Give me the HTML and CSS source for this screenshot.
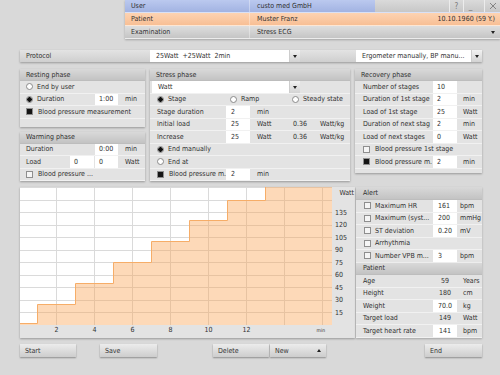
FILE: index.html
```html
<!DOCTYPE html>
<html>
<head>
<meta charset="utf-8">
<link rel="stylesheet" href="styles.css">
</head>
<body>
<div class="app">
  <div class="hdr">
    <div class="hrow user">
      <div class="hl">User</div>
      <div class="hv">custo med GmbH</div>
      <div class="wctl">
        <span class="wb">?</span>
        <span class="wb">_</span>
        <span class="wb wx"><svg width="8" height="8" viewBox="0 0 8 8"><path d="M1 1L7 7M7 1L1 7" stroke="#7a7a7a" stroke-width="0.9" fill="none"/></svg></span>
      </div>
    </div>
    <div class="hrow patient">
      <div class="hl">Patient</div>
      <div class="hv grow"><span>Muster Franz</span><span>10.10.1960 (59 Y.)</span></div>
    </div>
    <div class="hrow exam">
      <div class="hl">Examination</div>
      <div class="hv grow"><span>Stress ECG</span><i class="tri"></i></div>
    </div>
  </div>

  <div class="proto">
    <div class="plabel">Protocol</div>
    <div class="select ps1"><span class="stext">25Watt&nbsp; +25Watt&nbsp; 2min</span><i class="dd"></i></div>
    <div class="pgap"></div>
    <div class="select ps2"><span class="stext">Ergometer manually, BP manu...</span><i class="dd"></i></div>
  </div>

  <div class="main">
    <div class="col colleft">
      <div class="panel rest">
        <div class="ph">Resting phase</div>
        <div class="row"><span class="lab"><i class="rb"></i>End by user</span></div>
        <div class="row"><span class="lab"><i class="rb on"></i>Duration</span><span class="in">1:00</span><span class="u">min</span></div>
        <div class="row"><span class="lab full"><i class="cb on"></i>Blood pressure measurement</span></div>
      </div>
      <div class="panel warm">
        <div class="ph">Warming phase</div>
        <div class="row"><span class="lab">Duration</span><span class="in">0:00</span><span class="u">min</span></div>
        <div class="row"><span class="lab short">Load</span><span class="in in0">0</span><span class="in">0</span><span class="u">Watt</span></div>
        <div class="row"><span class="lab full"><i class="cb"></i>Blood pressure ...</span></div>
      </div>
    </div>

    <div class="panel stress">
      <div class="ph">Stress phase</div>
      <div class="row"><div class="select rsel"><span class="stext">Watt</span><i class="dd"></i></div></div>
      <div class="row"><span class="opt o1"><i class="rb on"></i>Stage</span><span class="opt o2"><i class="rb"></i>Ramp</span><span class="opt o3"><i class="rb"></i>Steady state</span></div>
      <div class="row"><span class="lab">Stage duration</span><span class="in">2</span><span class="u">min</span></div>
      <div class="row"><span class="lab">Initial load</span><span class="in">25</span><span class="u">Watt</span><span class="v">0.36</span><span class="u2">Watt/kg</span></div>
      <div class="row"><span class="lab">Increase</span><span class="in">25</span><span class="u">Watt</span><span class="v">0.36</span><span class="u2">Watt/kg</span></div>
      <div class="row"><span class="lab full"><i class="rb on"></i>End manually</span></div>
      <div class="row"><span class="lab full"><i class="rb"></i>End at</span></div>
      <div class="row"><span class="lab"><i class="cb on"></i>Blood pressure m.</span><span class="in">2</span><span class="u">min</span></div>
    </div>

    <div class="panel recov">
      <div class="ph">Recovery phase</div>
      <div class="row"><span class="lab">Number of stages</span><span class="in">10</span><span class="u"></span></div>
      <div class="row"><span class="lab">Duration of 1st stage</span><span class="in">2</span><span class="u">min</span></div>
      <div class="row"><span class="lab">Load of 1st stage</span><span class="in">25</span><span class="u">Watt</span></div>
      <div class="row"><span class="lab">Duration of next stag</span><span class="in">2</span><span class="u">min</span></div>
      <div class="row"><span class="lab">Load of next stages</span><span class="in">0</span><span class="u">Watt</span></div>
      <div class="row"><span class="lab full"><i class="cb"></i>Blood pressure 1st stage</span></div>
      <div class="row"><span class="lab"><i class="cb on"></i>Blood pressure m.</span><span class="in">2</span><span class="u">min</span></div>
    </div>
  </div>

  <div class="lower">
    <div class="chart">
      <div class="plotcol">
        <svg class="plot" width="312" height="138" viewBox="0 0 312 138">
          <rect width="312" height="138" fill="#ffffff"/>
          <path d="M36.5 0V138M74.5 0V138M112.5 0V138M150.5 0V138M188.5 0V138M226.5 0V138M264.5 0V138M302.5 0V138M0 125.5H312M0 113.5H312M0 100.5H312M0 88.5H312M0 75.5H312M0 63.5H312M0 50.5H312M0 38.5H312M0 25.5H312M0 13.5H312M0 0.5H312" stroke="#dadada" stroke-width="1" fill="none"/>
          <path d="M0 136.5H17.5V117.5H55.5V96.5H93.5V75.5H131.5V54.5H169.5V33.5H207.5V13.5H245.5V-2H312V138H0Z" fill="rgba(251,165,85,0.42)"/>
          <path d="M0 136.5H17.5V117.5H55.5V96.5H93.5V75.5H131.5V54.5H169.5V33.5H207.5V13.5H245.5V-2" stroke="#f6ad68" stroke-width="1" fill="none"/>
        </svg>
        <div class="xaxis">
          <span class="xt" style="left:36.5px">2</span>
          <span class="xt" style="left:74.5px">4</span>
          <span class="xt" style="left:112.5px">6</span>
          <span class="xt" style="left:150.5px">8</span>
          <span class="xt" style="left:188.5px">10</span>
          <span class="xt" style="left:226.5px">12</span>
          <span class="xmin">min</span>
        </div>
      </div>
      <div class="yaxis">
        <span class="yunit">Watt</span>
        <span class="yt" style="top:25.5px">135</span>
        <span class="yt" style="top:38px">120</span>
        <span class="yt" style="top:50.5px">105</span>
        <span class="yt" style="top:63px">90</span>
        <span class="yt" style="top:75.5px">75</span>
        <span class="yt" style="top:88px">60</span>
        <span class="yt" style="top:100.5px">45</span>
        <span class="yt" style="top:113px">30</span>
        <span class="yt" style="top:125.5px">15</span>
      </div>
    </div>

    <div class="rcol">
      <div class="panel alert">
        <div class="ph tall">Alert</div>
        <div class="row"><span class="lab"><i class="cb"></i>Maximum HR</span><span class="in">161</span><span class="u">bpm</span></div>
        <div class="row"><span class="lab"><i class="cb"></i>Maximum (syst...</span><span class="in">200</span><span class="u">mmHg</span></div>
        <div class="row"><span class="lab"><i class="cb"></i>ST deviation</span><span class="in">0.20</span><span class="u">mV</span></div>
        <div class="row"><span class="lab full"><i class="cb"></i>Arrhythmia</span></div>
        <div class="row"><span class="lab"><i class="cb"></i>Number VPB m...</span><span class="in">3</span><span class="u">bpm</span></div>
      </div>
      <div class="panel pat">
        <div class="ph mid">Patient</div>
        <div class="row"><span class="lab">Age</span><span class="val">59</span><span class="u">Years</span></div>
        <div class="row"><span class="lab">Height</span><span class="val">180</span><span class="u">cm</span></div>
        <div class="row"><span class="lab">Weight</span><span class="val white">70.0</span><span class="u">kg</span></div>
        <div class="row"><span class="lab">Target load</span><span class="val">149</span><span class="u">Watt</span></div>
        <div class="row"><span class="lab">Target heart rate</span><span class="val white">141</span><span class="u">bpm</span></div>
      </div>
    </div>
  </div>

  <div class="btns">
    <button class="btn b-start">Start</button>
    <button class="btn b-save">Save</button>
    <button class="btn b-del">Delete</button>
    <button class="btn b-new">New<i class="up"></i></button>
    <button class="btn b-end">End</button>
  </div>
</div>
</body>
</html>
```

FILE: styles.css
```css
* { box-sizing: border-box; margin: 0; padding: 0; }

body {
  background: #d9d9d9;
  font-family: "DejaVu Sans", Verdana, sans-serif;
  font-stretch: condensed;
  font-size: 7px;
  color: #303030;
  width: 500px;
  height: 375px;
  overflow: hidden;
}

.app { width: 500px; height: 375px; }

/* header */
.hdr {
  margin-left: 125px;
  width: 375px;
  box-shadow: 0 1px 2px rgba(0,0,0,0.25);
}
.hrow {
  display: flex;
  height: 13px;
  border-bottom: 1px solid rgba(255,255,255,0.45);
}
.hrow > div { display: flex; align-items: center; white-space: nowrap; }
.hl { width: 125px; padding-left: 6px; border-right: 1px solid rgba(255,255,255,0.35); }
.hv { width: 125px; padding-left: 7px; }
.hv.grow { flex: 1; justify-content: space-between; padding-right: 5px; }
.user { background: linear-gradient(#bbc9ef, #a2b3e2); }
.patient { background: linear-gradient(#fdd3b2, #f8bf95); }
.exam { background: linear-gradient(#dedede, #c5c5c5); }
.wctl {
  flex: 1;
  background: linear-gradient(#dadada, #c7c7c7);
  justify-content: flex-end;
  align-items: stretch !important;
}
.wb {
  width: 14px;
  display: flex;
  align-items: center;
  justify-content: center;
  border-left: 1px solid #ececec;
  color: #7a7a7a;
  font-size: 8px;
}
.wx { width: 16px; margin-left: 7px; }
.tri {
  width: 0; height: 0;
  border-left: 2.5px solid transparent;
  border-right: 2.5px solid transparent;
  border-top: 3px solid #222;
}

/* selects */
.select { display: flex; background: #fff; align-items: stretch; }
.stext { flex: 1; display: flex; align-items: center; padding-left: 6px; white-space: nowrap; overflow: hidden; }
.dd {
  width: 11px;
  position: relative;
  background: linear-gradient(#f2f2f2, #d3d3d3);
  border-left: 1px solid #cdcdcd;
}
.dd::after {
  content: "";
  position: absolute;
  left: 3px; top: 4.5px;
  border-left: 2.5px solid transparent;
  border-right: 2.5px solid transparent;
  border-top: 3px solid #222;
}

/* protocol */
.proto {
  display: flex;
  margin: 11px 0 0 20px;
  width: 462px;
  height: 12px;
  background: linear-gradient(#e3e3e3, #cfcfcf);
  box-shadow: 0 1px 2px rgba(0,0,0,0.3);
}
.plabel { width: 130px; padding-left: 6px; display: flex; align-items: center; }
.ps1 { width: 150px; }
.pgap { width: 56px; }
.ps2 { width: 126px; }

/* panels */
.main {
  display: flex;
  gap: 5px;
  margin: 7px 0 0 20px;
  width: 462px;
  align-items: flex-start;
}
.col { display: flex; flex-direction: column; gap: 5px; }
.panel { background: #e3e3e3; box-shadow: 0 1px 2px rgba(0,0,0,0.3); }
.ph {
  height: 12px;
  display: flex;
  align-items: center;
  padding-left: 6px;
  background: linear-gradient(#d9d9d9, #c3c3c3);
  border-bottom: 1px solid #bdbdbd;
}
.ph.tall { height: 13px; padding-left: 7px; }
.ph.mid { height: 12.5px; padding-left: 7px; }
.row {
  display: flex;
  height: 12.5px;
  border-bottom: 1px solid #f1f1f1;
  white-space: nowrap;
}
.row > span { display: flex; align-items: center; overflow: hidden; }
.in { background: #fff; padding-left: 4px; }
.lab.full { width: auto; flex: 1; }

.rb {
  width: 7px; height: 7px;
  border-radius: 50%;
  border: 1px solid #8a8a8a;
  background: #fff;
  margin-right: 4px;
  flex: none;
}
.rb.on { background: radial-gradient(circle, #111 0, #111 2.1px, #fff 2.6px); }
.cb {
  width: 7px; height: 7px;
  border: 1px solid #8e8e8e;
  background: #f5f5f5;
  margin-right: 5px;
  flex: none;
}
.cb.on { background: #151515; }

/* left column */
.colleft { width: 125px; }
.rest { padding-bottom: 8px; }
.colleft .lab { width: 75px; padding-left: 6px; }
.colleft .lab.short { width: 50px; }
.colleft .in { width: 23px; }
.colleft .in0 { width: 24px; margin-right: 1px; }
.colleft .u { flex: 1; padding-left: 7px; }
.colleft .lab.full { width: auto; }

/* stress */
.stress { width: 200px; }
.rsel { width: 148px; margin-left: 2px; }
.opt { padding-left: 7px; }
.o1 { width: 80px; }
.o2 { width: 62px; padding-left: 0; }
.o3 { flex: 1; padding-left: 0; }
.stress .lab { width: 76px; padding-left: 7px; }
.stress .in { width: 24px; padding-left: 5px; }
.stress .u { width: 38px; padding-left: 7px; }
.stress .v { width: 27px; padding-left: 5px; }
.stress .u2 { flex: 1; padding-left: 5px; }

/* recovery */
.recov { width: 127px; padding-bottom: 4px; }
.recov .lab { width: 78px; padding-left: 8px; }
.recov .in { width: 24px; }
.recov .u { flex: 1; padding-left: 6px; }

/* lower area */
.lower {
  display: flex;
  margin: 6px 0 0 20px;
  width: 462px;
  align-items: flex-start;
}
.chart {
  display: flex;
  width: 335px;
  height: 151px;
  background: #e3e3e3;
  box-shadow: 0 1px 2px rgba(0,0,0,0.3);
}
.plotcol { width: 312px; display: flex; flex-direction: column; }
.plot { display: block; }
.xaxis { position: relative; height: 13px; }
.xt { position: absolute; top: 1px; transform: translateX(-50%); }
.xmin { position: absolute; right: 7px; top: 2px; font-size: 5px; }
.yaxis { position: relative; flex: 1; }
.yunit { position: absolute; right: 1px; top: 2px; }
.yt { position: absolute; left: 3px; transform: translateY(-50%); }

.rcol { width: 126px; margin-left: 1px; display: flex; flex-direction: column; }
.rcol .panel { box-shadow: 0 1px 2px rgba(0,0,0,0.25); }
.alert .lab { width: 77px; padding-left: 8px; }
.alert .lab .cb { margin-right: 4px; }
.alert .in { width: 24px; padding-left: 5px; }
.alert .u { flex: 1; padding-left: 3px; }
.pat .lab { width: 77px; padding-left: 7px; }
.pat .val { width: 24px; justify-content: center; }
.pat .val.white { background: #fff; }
.pat .u { flex: 1; padding-left: 6px; }

/* buttons */
.btns { display: flex; margin: 6px 0 0 20px; height: 13px; }
.btn {
  font: inherit;
  color: #333;
  height: 13px;
  width: 56px;
  text-align: left;
  padding-left: 5px;
  border: none;
  background: linear-gradient(#ececec, #cdcdcd);
  box-shadow: 0 1px 1.5px rgba(0,0,0,0.35);
  display: flex;
  align-items: center;
  justify-content: space-between;
  padding-right: 5px;
}
.b-save { margin-left: 24px; width: 57px; }
.b-del { margin-left: 56px; }
.b-new { margin-left: 1px; }
.b-end { margin-left: 99px; width: 57px; }
.up {
  width: 0; height: 0;
  border-left: 2.5px solid transparent;
  border-right: 2.5px solid transparent;
  border-bottom: 3px solid #222;
}
```
